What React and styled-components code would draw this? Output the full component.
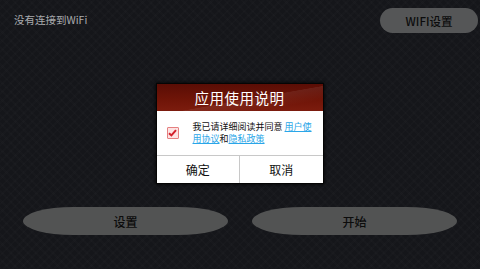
import React, {useState} from "react";
import styled, {createGlobalStyle} from "styled-components";

const Global = createGlobalStyle`
    html, body {
        margin: 0;
        padding: 0;
        background: #15161a;
    }
    * {
        box-sizing: border-box;
    }
`

const Pagina = styled.div`
    position: relative;
    width: 480px;
    height: 269px;
    overflow: hidden;
    display: flex;
    flex-direction: column;
    justify-content: space-between;
    background-color: #15161a;
    background-image:
        repeating-linear-gradient(45deg, rgba(255,255,255,0.012) 0 2px, transparent 2px 6px),
        repeating-linear-gradient(-45deg, rgba(255,255,255,0.012) 0 2px, transparent 2px 6px);
    font-family: "Noto Sans CJK SC", "Noto Sans", sans-serif;
`

const BarraTopo = styled.div`
    display: flex;
    justify-content: space-between;
    align-items: flex-start;
    padding: 8px 2px 0 14px;
`

const Status = styled.span`
    color: #a9abae;
    font-size: 10.5px;
    line-height: 14px;
    margin-top: 5px;
`

const BotaoWifi = styled.button`
    width: 98px;
    height: 25px;
    border: none;
    border-radius: 13px;
    background: #555657;
    color: #0c0c0c;
    font-family: inherit;
    font-size: 11.5px;
    font-weight: 500;
    padding: 0;
`

const BarraBaixo = styled.div`
    display: flex;
    gap: 24px;
    padding: 0 23px 34px;
`

const BotaoGrande = styled.button`
    flex: 1;
    height: 28px;
    border: none;
    border-radius: 50px / 14px;
    background: #525353;
    color: #0c0c0c;
    font-family: inherit;
    font-size: 12px;
    font-weight: 500;
    padding: 0;
`

const Sobreposicao = styled.div`
    position: absolute;
    inset: 0;
    display: flex;
    justify-content: center;
    align-items: center;
    padding: 0 1px 3px 0;
`

const Dialogo = styled.div`
    width: 168px;
    height: 101px;
    display: flex;
    flex-direction: column;
    background: #fff;
    border: 1px solid #050505;
    box-shadow: 0 0 3px 1px rgba(0,0,0,0.6);
`

const Cabecalho = styled.div`
    height: 27px;
    display: flex;
    justify-content: center;
    align-items: center;
    color: #fff;
    font-size: 14.5px;
    letter-spacing: 0.5px;
    background:
        linear-gradient(170deg, transparent 55%, rgba(255,255,255,0.07) 56%, transparent 80%),
        linear-gradient(180deg, #5a0d05 0%, #701508 60%, #7c1c0e 100%);
`

const Corpo = styled.div`
    flex: 1;
    display: flex;
    align-items: center;
    gap: 14px;
    padding: 0 0 0 10px;
    border-bottom: 1px solid #c8c8c8;
`

const Caixa = styled.span`
    flex: none;
    width: 12px;
    height: 12px;
    display: flex;
    align-items: center;
    justify-content: center;
    border: 1.5px solid #e58080;
    background: #fde3e3;
    border-radius: 1px;
`

const Texto = styled.p`
    margin: 0;
    width: 120px;
    font-size: 9px;
    line-height: 12px;
    color: #111;
`

const Link = styled.a`
    color: #2aa6e8;
    text-decoration: underline;
`

const Acoes = styled.div`
    height: 27px;
    display: flex;
`

const Acao = styled.button`
    flex: 1;
    border: none;
    background: #fff;
    color: #111;
    font-family: inherit;
    font-size: 12px;
    padding: 0;

    & + & {
        border-left: 1px solid #c8c8c8;
    }
`

function App() {
    const [aceito, setAceito] = useState(true)

    return (
        <Pagina>
            <Global/>
            <BarraTopo>
                <Status>没有连接到WiFi</Status>
                <BotaoWifi>WIFI设置</BotaoWifi>
            </BarraTopo>
            <BarraBaixo>
                <BotaoGrande>设置</BotaoGrande>
                <BotaoGrande>开始</BotaoGrande>
            </BarraBaixo>
            <Sobreposicao>
                <Dialogo>
                    <Cabecalho>应用使用说明</Cabecalho>
                    <Corpo>
                        <Caixa onClick={() => setAceito(!aceito)}>
                            {aceito &&
                                <svg width="9" height="8" viewBox="0 0 9 8">
                                    <path d="M1 4.2 L3.4 6.4 L8 1.2" fill="none" stroke="#d4202a" strokeWidth="2"/>
                                </svg>
                            }
                        </Caixa>
                        <Texto>
                            我已请详细阅读并同意 <Link>用户使</Link><br/>
                            <Link>用协议</Link>和<Link>隐私政策</Link>
                        </Texto>
                    </Corpo>
                    <Acoes>
                        <Acao>确定</Acao>
                        <Acao>取消</Acao>
                    </Acoes>
                </Dialogo>
            </Sobreposicao>
        </Pagina>
    )
}

export default App
